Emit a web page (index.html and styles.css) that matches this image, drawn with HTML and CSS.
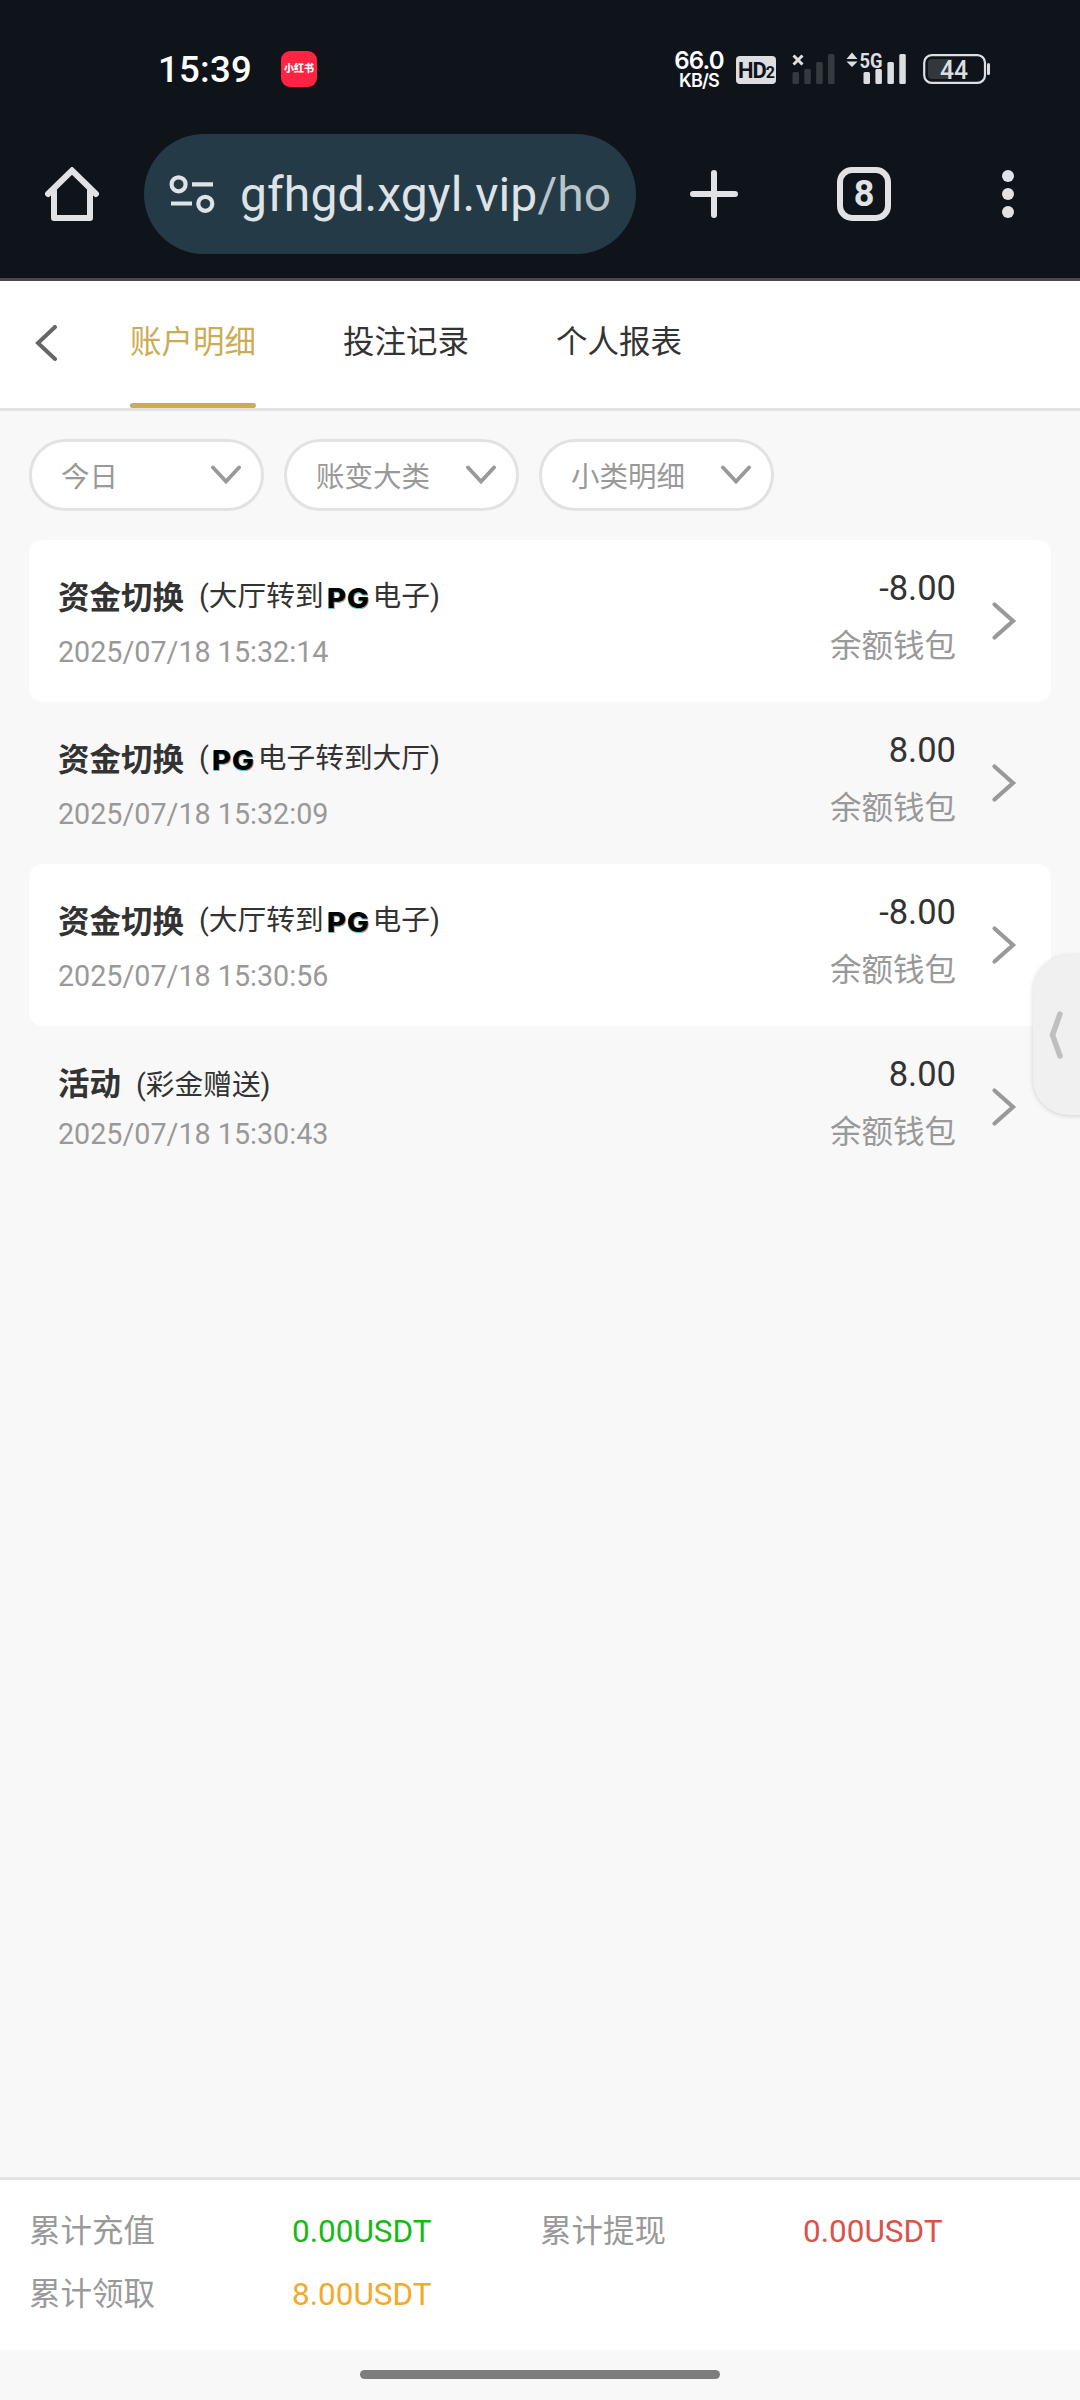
FILE: index.html
```html
<!DOCTYPE html>
<html lang="zh-CN">
<head>
<meta charset="utf-8">
<title>账户明细</title>
<link rel="stylesheet" href="styles.css">
</head>
<body>
<div class="phone">
  <header class="chrome">
    <div class="status">
      <span class="clock">15:39</span>
      <span class="app-badge"><span class="app-name">小红书</span></span>
      <div class="status-right">
        <div class="speed"><span class="speed-num">66.0</span><span class="speed-unit">KB/S</span></div>
        <span class="hd">HD<span class="hd-sub">2</span></span>
        <svg class="signal-off" width="44" height="36" viewBox="0 0 44 36">
          <g fill="#353a3e"><rect x="0.5" y="24" width="6.5" height="12" rx="1.5"/><rect x="12.3" y="21" width="6.5" height="15" rx="1.5"/><rect x="24.2" y="14" width="6.5" height="22" rx="1.5"/><rect x="36" y="6" width="6.5" height="30" rx="1.5"/></g>
          <path d="M1.500 7.500l9 9M10.500 7.500l-9 9" stroke="#dcdee1" stroke-width="3"/>
        </svg>
        <svg class="signal-on" width="62" height="36" viewBox="0 0 62 36">
          <path d="M0.5 11L6 4.500L11.500 11zM0.500 13.500h11L6 19z" fill="#dcdee1"/>
          <text x="13.500" y="19.500" class="net" textLength="23" lengthAdjust="spacingAndGlyphs">5G</text>
          <g fill="#dcdee1"><rect x="17.500" y="24" width="6.500" height="12" rx="1.500"/><rect x="29.400" y="21" width="6.500" height="15" rx="1.500"/><rect x="41.400" y="14" width="6.500" height="22" rx="1.500"/><rect x="53.300" y="6" width="6.500" height="30" rx="1.500"/></g>
        </svg>
        <svg class="battery" width="68" height="30" viewBox="0 0 68 30">
          <rect x="1.200" y="1.200" width="60.800" height="27.600" rx="7.500" fill="none" stroke="#dcdee1" stroke-width="2.200"/>
          <path d="M9 5H29V25H9a4 4 0 0 1-4-4V9a4 4 0 0 1 4-4z" fill="#32373b"/>
          <rect x="64" y="9" width="3" height="12" rx="1.500" fill="#dcdee1"/>
          <text x="17" y="24.500" class="level" textLength="28" lengthAdjust="spacingAndGlyphs">44</text>
        </svg>
      </div>
    </div>
    <div class="toolbar">
      <svg class="home" width="54" height="54" viewBox="0 0 54 54" fill="none" stroke="#e1e2e5" stroke-linejoin="round" stroke-linecap="round">
        <path d="M3 27L27 3.500L51 27" stroke-width="6" stroke-linejoin="miter"/>
        <path d="M9 24V51H45V24" stroke-width="6"/>
      </svg>
      <div class="address">
        <svg width="48" height="40" viewBox="0 0 48 40" fill="none" stroke="#dfe3e6" stroke-width="4.200">
          <circle cx="10.600" cy="10.300" r="7"/><path d="M24 10.300h21M3 29.500h21"/><circle cx="37.300" cy="29.800" r="7"/>
        </svg>
        <span class="url">gfhgd.xgyl.vip<span class="path">/ho</span></span>
      </div>
      <svg class="plus" width="48" height="48" viewBox="0 0 48 48"><path d="M24 3v42M3 24h42" stroke="#e1e2e5" stroke-width="6" stroke-linecap="round"/></svg>
      <span class="tabcount">8</span>
      <svg class="dots" width="12" height="48" viewBox="0 0 12 48" fill="#e1e2e5"><circle cx="6" cy="6" r="6"/><circle cx="6" cy="24" r="6"/><circle cx="6" cy="42" r="6"/></svg>
    </div>
  </header>

  <nav class="tabs">
    <svg class="back" width="24" height="36" viewBox="0 0 24 36"><path d="M21 2L4 18L21 34" fill="none" stroke="#666" stroke-width="4" stroke-linecap="round"/></svg>
    <span class="tab active">账户明细</span>
    <span class="tab">投注记录</span>
    <span class="tab">个人报表</span>
  </nav>

  <main class="content">
    <div class="filters">
      <div class="filter"><span>今日</span><svg class="down" width="30" height="20" viewBox="0 0 30 20"><path d="M2 2.500L15 16.500L28 2.500"/></svg></div>
      <div class="filter"><span>账变大类</span><svg class="down" width="30" height="20" viewBox="0 0 30 20"><path d="M2 2.500L15 16.500L28 2.500"/></svg></div>
      <div class="filter"><span>小类明细</span><svg class="down" width="30" height="20" viewBox="0 0 30 20"><path d="M2 2.500L15 16.500L28 2.500"/></svg></div>
    </div>

    <section class="list">
      <article class="record">
        <div class="info"><div class="title"><b>资金切换</b><span class="note">(大厅转到<span class="pg">PG</span>电子)</span></div><time>2025/07/18 15:32:14</time></div>
        <div class="sum"><span class="amount">-8.00</span><span class="wallet">余额钱包</span></div>
        <svg class="go" width="26" height="40" viewBox="0 0 26 40"><path d="M3.500 3.500L22 20L3.500 36.500"/></svg>
      </article>
      <article class="record">
        <div class="info"><div class="title"><b>资金切换</b><span class="note">(<span class="pg">PG</span>电子转到大厅)</span></div><time>2025/07/18 15:32:09</time></div>
        <div class="sum"><span class="amount">8.00</span><span class="wallet">余额钱包</span></div>
        <svg class="go" width="26" height="40" viewBox="0 0 26 40"><path d="M3.500 3.500L22 20L3.500 36.500"/></svg>
      </article>
      <article class="record">
        <div class="info"><div class="title"><b>资金切换</b><span class="note">(大厅转到<span class="pg">PG</span>电子)</span></div><time>2025/07/18 15:30:56</time></div>
        <div class="sum"><span class="amount">-8.00</span><span class="wallet">余额钱包</span></div>
        <svg class="go" width="26" height="40" viewBox="0 0 26 40"><path d="M3.500 3.500L22 20L3.500 36.500"/></svg>
      </article>
      <article class="record plain">
        <div class="info"><div class="title"><b>活动</b><span class="note">(彩金赠送)</span></div><time>2025/07/18 15:30:43</time></div>
        <div class="sum"><span class="amount">8.00</span><span class="wallet">余额钱包</span></div>
        <svg class="go" width="26" height="40" viewBox="0 0 26 40"><path d="M3.500 3.500L22 20L3.500 36.500"/></svg>
      </article>
    </section>
  </main>

  <footer class="totals">
    <span class="label">累计充值</span><span class="green">0.00USDT</span>
    <span class="label">累计提现</span><span class="red">0.00USDT</span>
    <span class="label">累计领取</span><span class="orange">8.00USDT</span>
  </footer>
  <div class="gesture"><div class="gesture-bar"></div></div>

  <div class="drawer"><svg width="16" height="50" viewBox="0 0 16 50"><path d="M12 4L4.500 25L12 46" fill="none" stroke="#bfbfbf" stroke-width="5.500" stroke-linecap="round" stroke-linejoin="round"/></svg></div>
</div>
</body>
</html>
```
FILE: styles.css
```css
* { box-sizing: border-box; }
body {
  margin: 0;
  font-family: Roboto, "Noto Sans CJK SC", sans-serif;
  background: #f8f8f8;
  color: #333;
}
svg { display: block; flex: none; }
.phone {
  position: relative;
  width: 1080px;
  height: 2400px;
  display: flex;
  flex-direction: column;
  overflow: hidden;
}

/* browser chrome */
.chrome {
  height: 281px;
  background: #0f141b;
  border-bottom: 3px solid #47494d;
  flex: none;
}
.status {
  height: 134px;
  padding: 48px 89px 0 158px;
  display: flex;
  align-items: flex-start;
}
.clock {
  width: 123px;
  font-size: 36.5px;
  font-weight: 500;
  line-height: 43px;
  letter-spacing: 0.3px;
  color: #fff;
  white-space: nowrap;
}
.app-badge {
  width: 36px;
  height: 36px;
  margin-top: 3px;
  border-radius: 9px;
  background: #ff2442;
  display: flex;
  align-items: center;
  justify-content: center;
}
.app-name {
  color: #fff;
  font-size: 10px;
  line-height: 12px;
  font-weight: 900;
  white-space: nowrap;
}
.status-right {
  margin-left: auto;
  display: flex;
  align-items: flex-start;
}
.speed {
  width: 50px;
  margin-right: 12px;
  color: #fff;
  text-align: center;
  font-family: Inter, sans-serif;
  font-weight: 600;
  letter-spacing: -0.8px;
  padding-top: 1px;
}
.speed span { display: block; white-space: nowrap; }
.speed-num { font-size: 24px; line-height: 24px; }
.speed-unit { font-size: 18px; line-height: 16px; }
.hd {
  width: 40px;
  height: 28px;
  margin: 8px 16px 0 0;
  border-radius: 4px;
  background: #dcdee1;
  color: #0f141b;
  font-size: 22px;
  font-weight: 700;
  letter-spacing: -1px;
  line-height: 29px;
  text-align: center;
  white-space: nowrap;
}
.hd-sub { font-size: 16px; }
.signal-on { margin-left: 10px; }
.battery { margin: 6px 0 0 15px; }
.net { font-size: 21px; font-weight: 700; fill: #dcdee1; }
.level { font-size: 25px; font-weight: 500; fill: #dcdee1; }

.toolbar {
  height: 120px;
  padding: 0 66px 0 45px;
  display: flex;
  align-items: center;
}
.address {
  width: 492px;
  height: 120px;
  margin: 0 54px 0 45px;
  padding-left: 24px;
  border-radius: 60px;
  background: #243b47;
  display: flex;
  align-items: center;
}
.url {
  margin-left: 24px;
  font-size: 48px;
  line-height: 60px;
  letter-spacing: 0.1px;
  padding-top: 1px;
  color: #dfe3e6;
  white-space: nowrap;
}
.path { color: #b9c3c9; }
.tabcount {
  width: 54px;
  height: 54px;
  margin: 0 111px 0 99px;
  border: 6px solid #e1e2e5;
  border-radius: 15px;
  color: #e1e2e5;
  font-size: 36px;
  font-weight: 700;
  line-height: 42px;
  text-align: center;
}

/* page tabs */
.tabs {
  height: 130px;
  padding-left: 34px;
  background: #fff;
  border-bottom: 3px solid #e2e2e2;
  display: flex;
  flex: none;
}
.back { margin: 44px 72px 0 0; }
.tab {
  margin-right: 87px;
  padding-top: 38px;
  font-size: 31.5px;
  line-height: 48px;
  white-space: nowrap;
}
.active {
  color: #cbac55;
  display: flex;
  flex-direction: column;
  justify-content: space-between;
}
.active::after {
  content: "";
  height: 5px;
  border-radius: 3px;
  background: #cbac50;
}

.content { flex: 1; padding: 28px 29px 0; }
.filters { display: flex; gap: 20px; }
.filter {
  width: 235px;
  height: 72px;
  padding: 0 20px 0 29px;
  border: 3px solid #e2e2e2;
  border-radius: 36px;
  background: #fff;
  color: #999;
  font-size: 28.5px;
  display: flex;
  align-items: center;
  justify-content: space-between;
  white-space: nowrap;
}
.filter span { margin-top: -2px; }
.down path, .go path {
  fill: none;
  stroke: #999;
  stroke-width: 3.8;
  stroke-linecap: round;
}
.go path { stroke-width: 4.2; }

.list { margin-top: 29px; }
.record {
  height: 162px;
  padding: 0 34px 0 29px;
  border-radius: 14px;
  display: flex;
}
.record:nth-child(odd) { background: #fff; }
.info { flex: 1; padding-top: 36px; }
.title { display: flex; height: 59px; line-height: 46px; white-space: nowrap; }
.title b { font-size: 31.5px; font-weight: 700; }
.note { margin-left: 15px; margin-top: -3px; font-size: 28.7px; }
.pg {
  display: inline-block;
  width: 43px;
  margin: 0 3px 0 3px;
  font-family: Inter, sans-serif;
  font-size: 27.5px;
  font-weight: 800;
  line-height: 30px;
  letter-spacing: 1px;
  color: #000;
  transform: translateY(2px) scaleX(1.06);
  transform-origin: left center;
  text-shadow: -0.5px 0.5px 0 #54d5e8, 1px 0.5px 0 #ff8550;
}
time {
  display: block;
  font-size: 28.7px;
  line-height: 34px;
  color: #999;
  white-space: nowrap;
}
.plain .title { height: 55px; }
.plain .note { margin-top: 0; }
.sum {
  padding-top: 27px;
  margin-right: 35px;
  text-align: right;
}
.sum span { display: block; white-space: nowrap; }
.amount { font-size: 34.5px; line-height: 42px; }
.wallet { margin-top: 14px; font-size: 31.5px; line-height: 48px; color: #999; }
.go { margin-top: 61px; }

.totals {
  height: 173px;
  padding: 20px 29px 0;
  border-top: 3px solid #e2e2e2;
  background: #fff;
  display: grid;
  grid-template-columns: 263px 248px 263px 248px;
  grid-auto-rows: 63px;
  font-size: 31.5px;
  line-height: 63px;
  flex: none;
}
.label { color: #999; }
.green { color: #17b917; }
.red { color: #d9534a; }
.orange { color: #f4a928; }
.gesture { height: 50px; padding-top: 20px; flex: none; }
.gesture-bar {
  width: 360px;
  height: 9px;
  margin: 0 auto;
  border-radius: 5px;
  background: #7d7d7d;
}
.drawer {
  position: absolute;
  left: 1033px;
  top: 955px;
  width: 60px;
  height: 160px;
  padding-left: 15px;
  border-radius: 36px 0 0 36px;
  background: #f0f0f0;
  box-shadow: 0 1px 5px rgba(0, 0, 0, 0.16);
  display: flex;
  align-items: center;
}
```
